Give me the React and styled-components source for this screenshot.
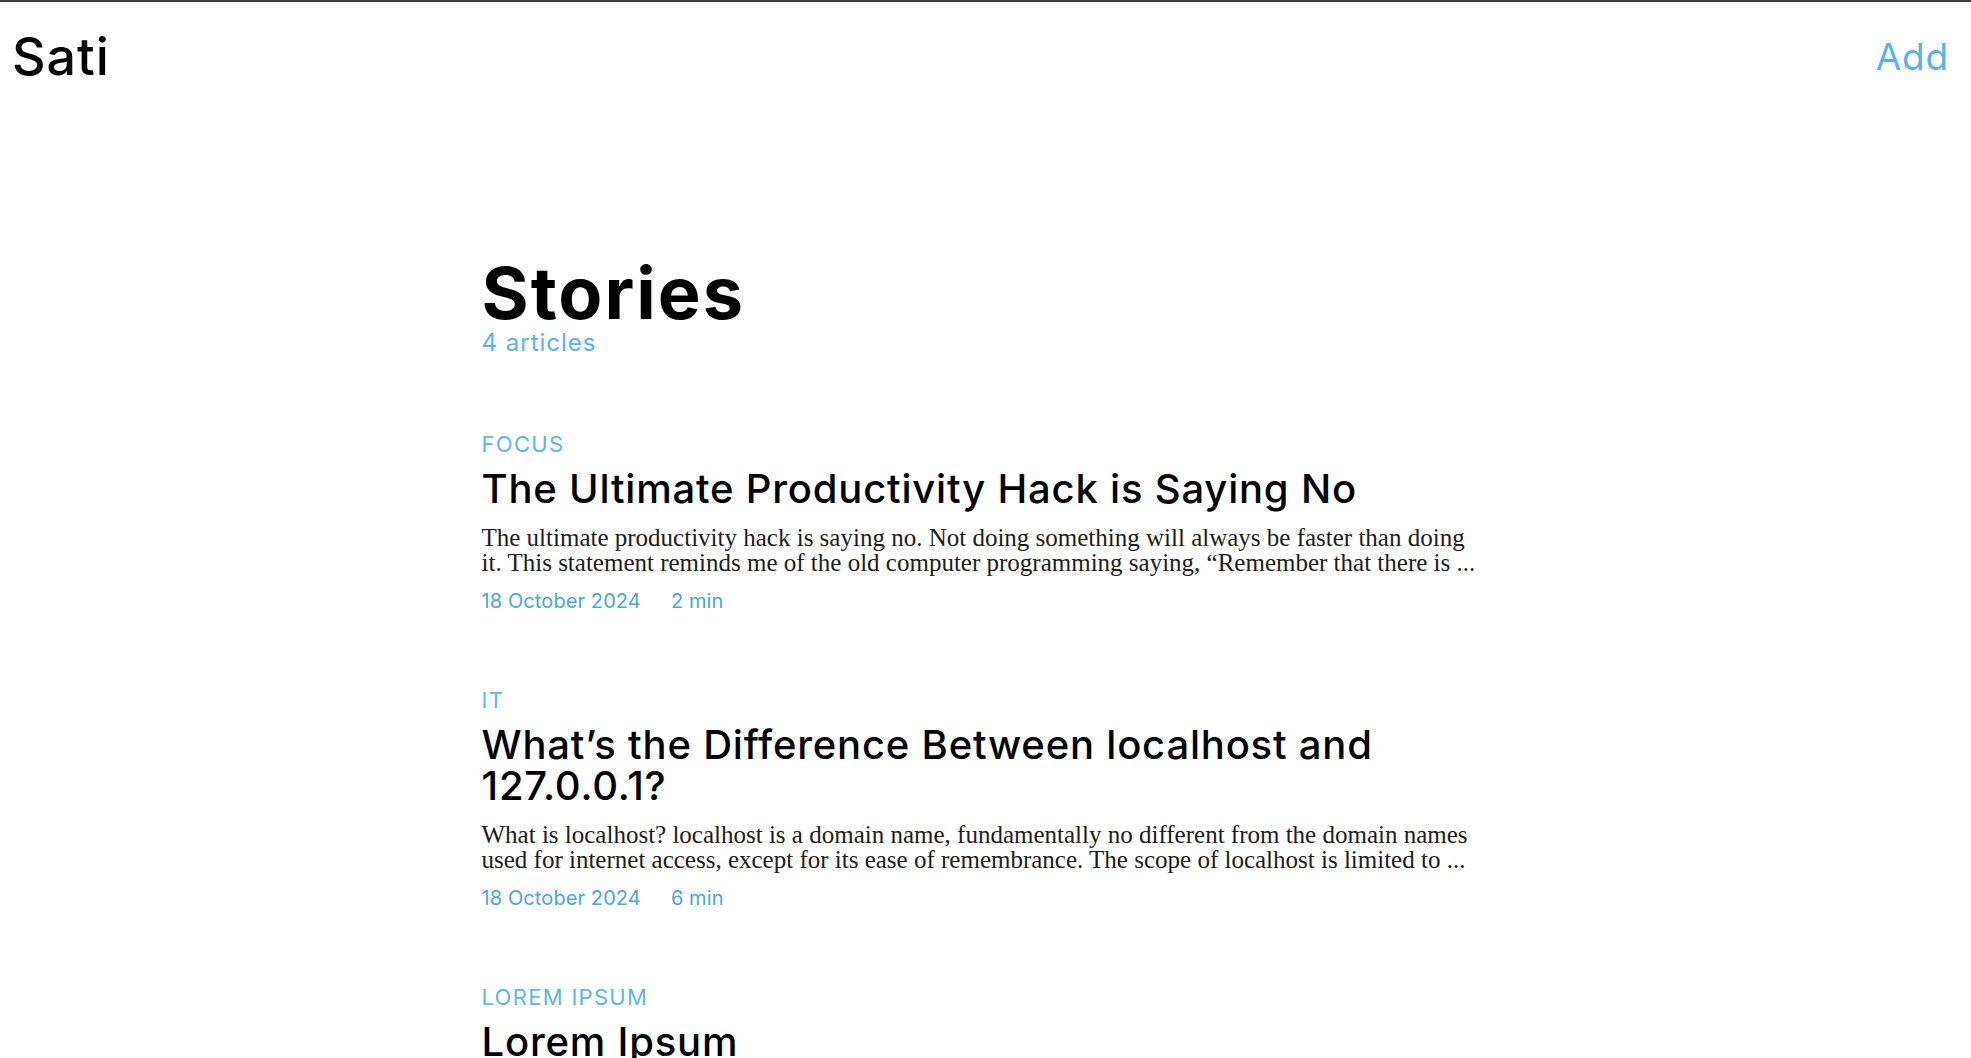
import React from "react";
import styled, { createGlobalStyle } from "styled-components";

const GlobalStyle = createGlobalStyle`
  html, body {
    margin: 0;
    padding: 0;
    background: #ffffff;
  }
  body {
    font-family: Inter, "Open Sans", sans-serif;
    color: #000;
  }
  * { box-sizing: border-box; }
`;

const Page = styled.div`
  border-top: 2px solid #3b3b3b;
  min-height: 100vh;
`;

const Header = styled.header`
  height: 108px;
  display: flex;
  align-items: center;
  justify-content: space-between;
  padding: 0 22px 0 12px;
`;

const Brand = styled.a`
  font-family: Inter, sans-serif;
  font-weight: 500;
  font-size: 52px;
  letter-spacing: 1px;
  color: #000;
  text-decoration: none;
`;

const AddLink = styled.a`
  font-family: Inter, sans-serif;
  font-weight: 400;
  font-size: 37px;
  letter-spacing: 0.8px;
  color: #5ab3ec;
  text-decoration: none;
`;

const Main = styled.main`
  width: 1008px;
  margin: 0 auto;
  padding-top: 147px;
  padding-bottom: 80px;
`;

const Heading = styled.h1`
  margin: 0;
  font-family: Inter, sans-serif;
  font-weight: 700;
  font-size: 72px;
  line-height: 72px;
  letter-spacing: 2px;
  color: #000;
`;

const Count = styled.div`
  font-family: Inter, sans-serif;
  font-weight: 400;
  font-size: 24px;
  line-height: 28px;
  letter-spacing: 1px;
  color: #5ab3ec;
`;

const List = styled.div`
  margin-top: 74px;
  display: flex;
  flex-direction: column;
  gap: 74px;
`;

const Article = styled.article`
  display: flex;
  flex-direction: column;
`;

const Category = styled.div`
  font-family: Inter, sans-serif;
  font-weight: 400;
  font-size: 22px;
  line-height: 26px;
  letter-spacing: 1.3px;
  color: #5fb5ec;
  text-transform: uppercase;
`;

const Title = styled.h2`
  margin: 11px 0 0;
  font-family: Inter, sans-serif;
  font-weight: 500;
  font-size: 40px;
  line-height: 41px;
  letter-spacing: 0.8px;
  color: #000;
`;

const Excerpt = styled.p`
  margin: 17px 0 0;
  font-family: "Liberation Serif", "Times New Roman", serif;
  font-size: 25px;
  line-height: 24.5px;
  color: #1c1c1c;
`;

const Meta = styled.div`
  margin-top: 14px;
  display: flex;
  gap: 30px;
  font-family: Inter, sans-serif;
  font-weight: 400;
  font-size: 20px;
  line-height: 24px;
  letter-spacing: 0.1px;
  color: #4aa6e2;
`;

const articles = [
  {
    category: "Focus",
    title: "The Ultimate Productivity Hack is Saying No",
    excerpt:
      "The ultimate productivity hack is saying no. Not doing something will always be faster than doing it. This statement reminds me of the old computer programming saying, “Remember that there is ...",
    date: "18 October 2024",
    read: "2 min",
  },
  {
    category: "IT",
    title: "What’s the Difference Between localhost and 127.0.0.1?",
    excerpt:
      "What is localhost? localhost is a domain name, fundamentally no different from the domain names used for internet access, except for its ease of remembrance. The scope of localhost is limited to ...",
    date: "18 October 2024",
    read: "6 min",
  },
  {
    category: "Lorem Ipsum",
    title: "Lorem Ipsum",
    excerpt:
      "Lorem ipsum dolor sit amet, consectetur adipiscing elit, sed do eiusmod tempor incididunt ut labore et dolore magna aliqua. Ut enim ad minim veniam, quis nostrud exercitation ullamco ...",
    date: "18 October 2024",
    read: "1 min",
  },
  {
    category: "Lorem Ipsum",
    title: "Dolor Sit Amet",
    excerpt:
      "Duis aute irure dolor in reprehenderit in voluptate velit esse cillum dolore eu fugiat nulla pariatur. Excepteur sint occaecat cupidatat non proident, sunt in culpa qui officia ...",
    date: "18 October 2024",
    read: "1 min",
  },
];

export default function App() {
  return (
    <Page>
      <GlobalStyle />
      <Header>
        <Brand href="#">Sati</Brand>
        <AddLink href="#">Add</AddLink>
      </Header>
      <Main>
        <Heading>Stories</Heading>
        <Count>{articles.length} articles</Count>
        <List>
          {articles.map((a, i) => (
            <Article key={i}>
              <Category>{a.category}</Category>
              <Title>{a.title}</Title>
              <Excerpt>{a.excerpt}</Excerpt>
              <Meta>
                <span>{a.date}</span>
                <span>{a.read}</span>
              </Meta>
            </Article>
          ))}
        </List>
      </Main>
    </Page>
  );
}
